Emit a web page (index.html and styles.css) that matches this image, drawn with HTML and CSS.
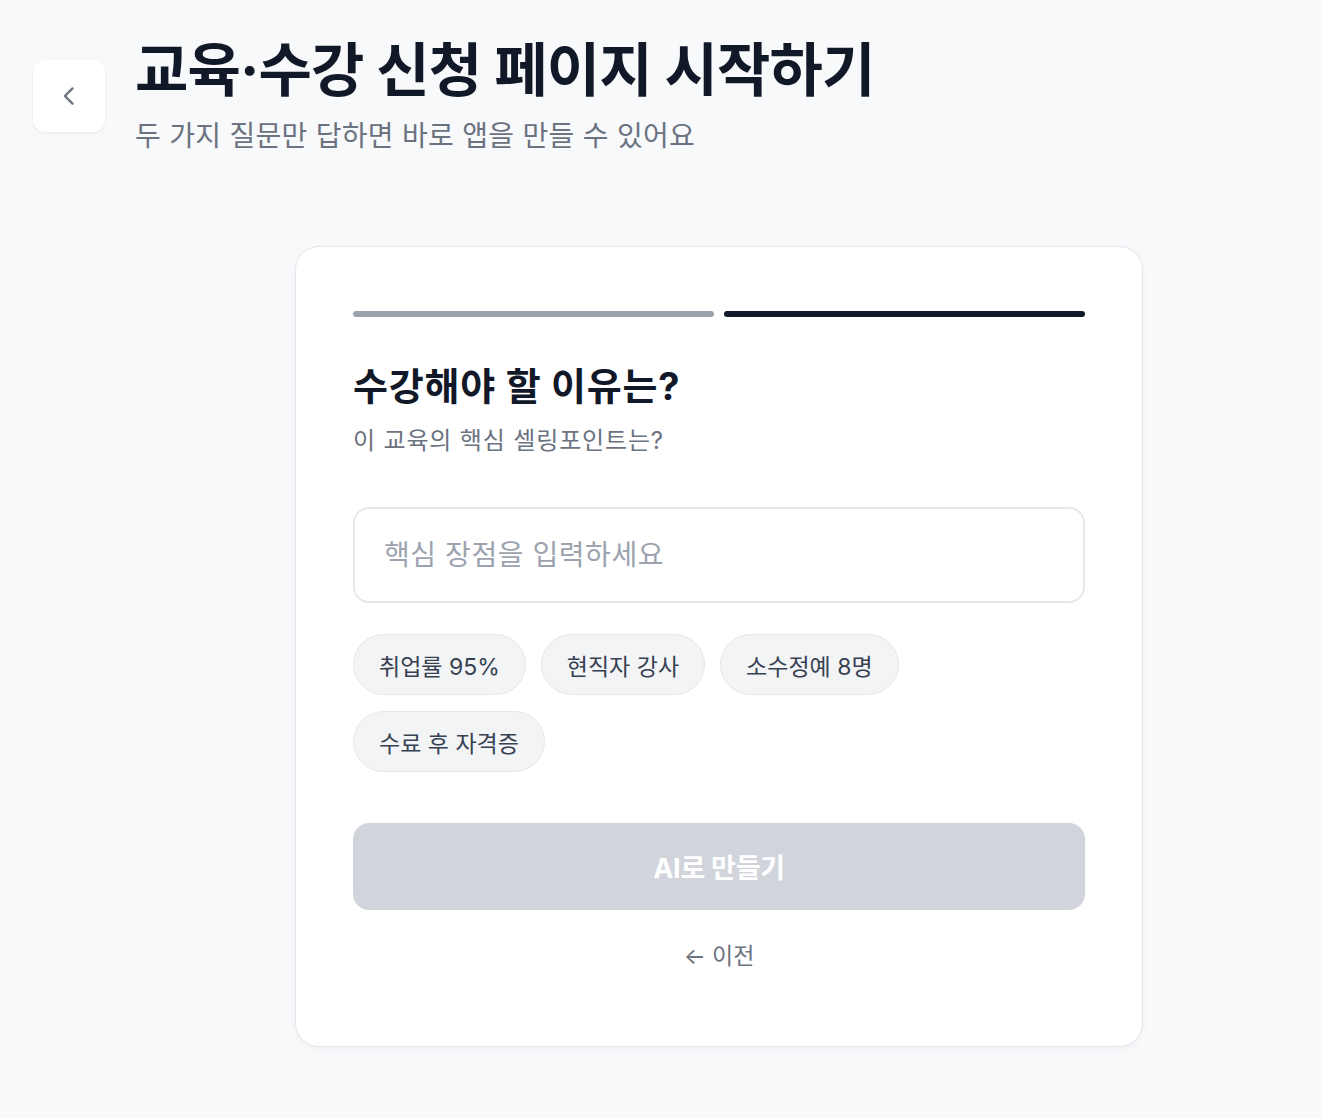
FILE: index.html
```html
<!DOCTYPE html>
<html lang="ko">
<head>
<meta charset="utf-8">
<link rel="stylesheet" href="styles.css">
</head>
<body>
<div class="page">
  <header class="header">
    <button class="back" aria-label="뒤로">
      <svg width="28" height="28" viewBox="0 0 24 24" fill="none" stroke="#6b7280" stroke-width="2" stroke-linecap="round" stroke-linejoin="round"><path d="M15 5.5l-6.5 6.5 6.5 6.5"/></svg>
    </button>
    <div class="titles">
      <h1 class="title">교육·수강 신청 페이지 시작하기</h1>
      <p class="subtitle">두 가지 질문만 답하면 바로 앱을 만들 수 있어요</p>
    </div>
  </header>
  <main class="main">
    <section class="card">
      <div class="progress">
        <span class="bar bar-done"></span>
        <span class="bar bar-active"></span>
      </div>
      <h2 class="q-title">수강해야 할 이유는?</h2>
      <p class="q-sub">이 교육의 핵심 셀링포인트는?</p>
      <input class="field" type="text" placeholder="핵심 장점을 입력하세요">
      <div class="chips">
        <button class="chip">취업률 95%</button>
        <button class="chip">현직자 강사</button>
        <button class="chip">소수정예 8명</button>
        <button class="chip">수료 후 자격증</button>
      </div>
      <button class="submit" disabled>AI로 만들기</button>
      <button class="prev">← 이전</button>
    </section>
  </main>
</div>
</body>
</html>
```

FILE: styles.css
```css
* { box-sizing: border-box; }
html, body { margin: 0; padding: 0; }
body {
  background: #f8f9fb;
  font-family: Inter, "Noto Sans CJK KR", "Noto Sans", sans-serif;
  color: #111827;
}
.page {
  padding: 32px 0 72px 33px;
}
.header {
  display: flex;
  align-items: flex-start;
  gap: 30px;
}
.back {
  margin-top: 28px;
  width: 72px;
  height: 72px;
  border: none;
  border-radius: 12px;
  background: #ffffff;
  box-shadow: 0 1px 3px rgba(17, 24, 39, 0.08);
  display: flex;
  align-items: center;
  justify-content: center;
  padding: 0;
}
.titles { display: flex; flex-direction: column; }
.title {
  margin: 0;
  font-size: 58px;
  font-weight: 700;
  letter-spacing: -0.015em;
  line-height: 76px;
  color: #111827;
}
.subtitle {
  margin: 10px 0 0;
  font-size: 28px;
  line-height: 36px;
  letter-spacing: 0.01em;
  color: #6b7280;
}
.main {
  padding-left: 262px;
  margin-top: 92px;
}
.card {
  width: 848px;
  background: #ffffff;
  border: 1px solid #e5e7eb;
  border-radius: 24px;
  box-shadow: 0 2px 6px rgba(17, 24, 39, 0.04);
  padding: 64px 57px 74px;
  display: flex;
  flex-direction: column;
}
.progress {
  display: flex;
  gap: 10px;
}
.bar {
  flex: 1;
  height: 6px;
  border-radius: 3px;
}
.bar-done { background: #9ca3af; }
.bar-active { background: #111827; }
.q-title {
  margin: 44px 0 0;
  font-size: 38px;
  font-weight: 700;
  letter-spacing: 0.02em;
  line-height: 50px;
  color: #111827;
}
.q-sub {
  margin: 14px 0 0;
  font-size: 24px;
  line-height: 32px;
  letter-spacing: 0.035em;
  color: #6b7280;
}
.field {
  margin-top: 50px;
  height: 96px;
  width: 100%;
  border: 2px solid #e5e7eb;
  border-radius: 16px;
  padding: 0 29px;
  font-family: inherit;
  font-size: 28px;
  letter-spacing: 0.02em;
  color: #111827;
  background: #ffffff;
  outline: none;
}
.field::placeholder { color: #9ca3af; }
.chips {
  margin-top: 31px;
  display: flex;
  flex-wrap: wrap;
  gap: 16px 15px;
}
.chip {
  height: 61px;
  padding: 0 25px;
  border: 1px solid #e5e7eb;
  border-radius: 999px;
  background: #f3f4f6;
  font-family: inherit;
  font-size: 23px;
  letter-spacing: 0;
  color: #374151;
}
.submit {
  margin-top: 51px;
  height: 87px;
  width: 100%;
  border: none;
  border-radius: 16px;
  background: #d1d5db;
  color: #ffffff;
  font-family: inherit;
  font-size: 27px;
  font-weight: 700;
  letter-spacing: -0.01em;
}
.prev {
  margin-top: 30px;
  align-self: center;
  border: none;
  background: none;
  padding: 0;
  font-family: inherit;
  font-size: 23px;
  line-height: 32px;
  color: #6b7280;
}
```
